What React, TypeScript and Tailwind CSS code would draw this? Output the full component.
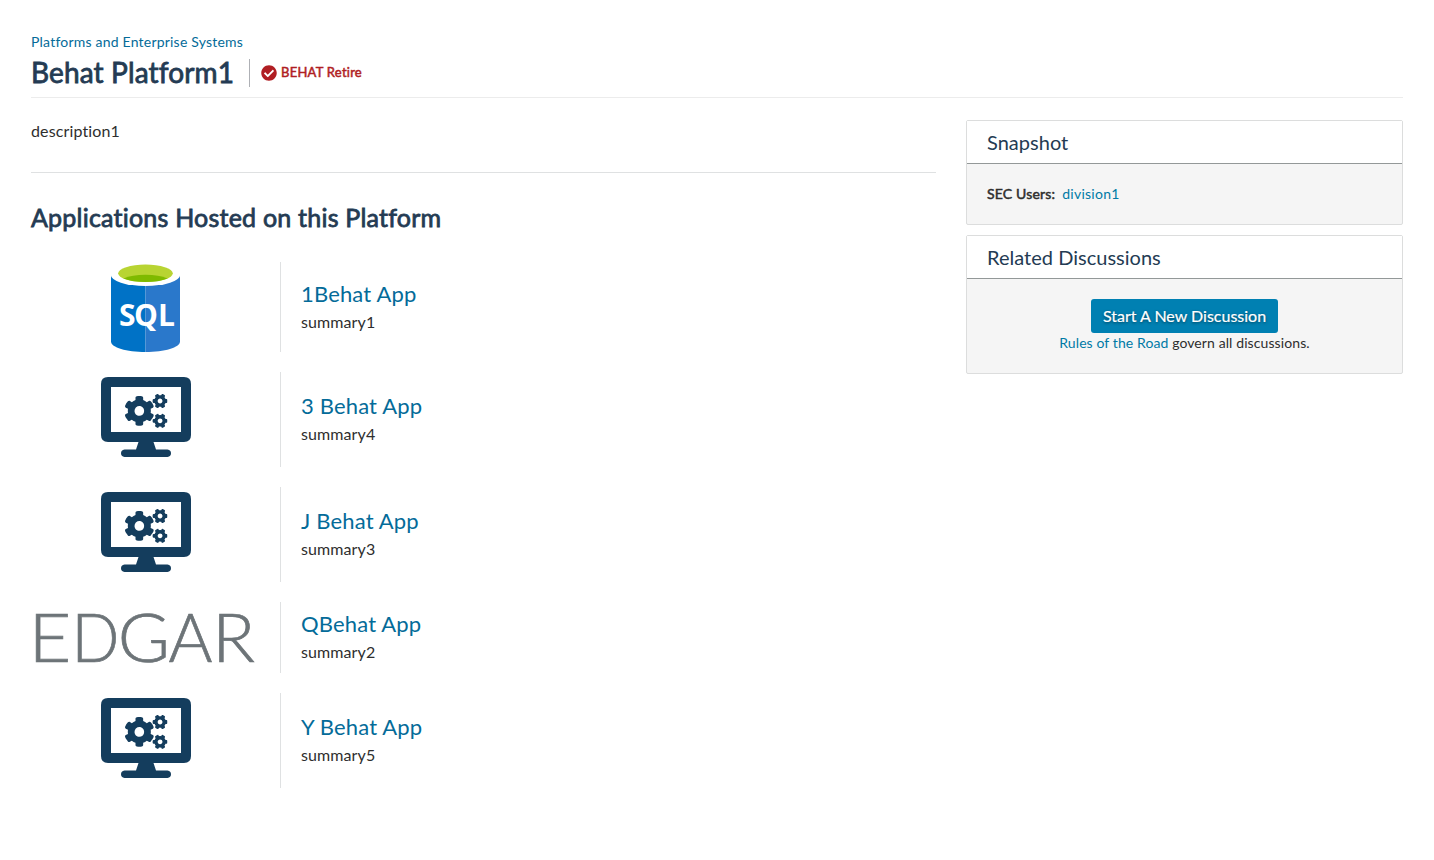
import React from "react";
import { FaCheckCircle, FaCogs } from "react-icons/fa";

function SqlLogo() {
  return (
    <svg width="90" height="90" viewBox="0 0 90 90" role="img" aria-label="SQL">
      <path d="M10 13V79.500C10 85.500 25.500 90 44.500 90V13Z" fill="#0072c6" />
      <path d="M79 13V79.500C79 85.500 63.500 90 44.500 90V13Z" fill="#2a78cb" />
      <ellipse cx="44.500" cy="12.500" rx="34.800" ry="11.500" fill="#fff" />
      <ellipse cx="44.500" cy="11.300" rx="27.300" ry="8.700" fill="#b8d432" />
      <path d="M22.500 16.500Q31 12.800 44.500 12.800T66.500 16.500Q58 20 44.500 20T22.500 16.500Z" fill="#7fba00" />
      <text x="18 33 57" y="64" fill="#fff" className="font-['Open_Sans',sans-serif] text-[30px] font-bold">
        SQL
      </text>
    </svg>
  );
}

function MonitorLogo() {
  return (
    <svg width="90" height="80" viewBox="0 0 90 80" className="mt-[5px] mb-2.5 text-[#143d5d]" role="img" aria-label="Application">
      <path
        fillRule="evenodd"
        fill="currentColor"
        d="M7 0H83Q90 0 90 7V58Q90 65 83 65H52.500L55 72.500H46.500Q50 72.500 66.500 72.500Q70 73 70 76.250T66.500 80H23.500Q20 79.500 20 76.250T23.500 72.500H35L37.500 65H7Q0 65 0 58V7Q0 0 7 0ZM10 10V55H80V10Z"
      />
      <FaCogs x="24" y="17" className="h-[34px] w-[42.5px]" />
    </svg>
  );
}

const edgarLetters = [
  { letter: "E", transform: "translate(-2.6 60) scale(1.1 1)" },
  { letter: "D", transform: "translate(40.5 60) scale(0.94 1)" },
  { letter: "G", transform: "translate(86.7 60) scale(1.06 1)" },
  { letter: "A", transform: "translate(137.5 60) scale(1 1)" },
  { letter: "R", transform: "translate(181.2 60) scale(1.05 1)" },
];

function EdgarLogo() {
  return (
    <svg width="230" height="71" viewBox="0 0 230 71" className="overflow-visible" role="img" aria-label="EDGAR">
      <g fill="#6d7478" stroke="#6d7478" strokeWidth="0.700" className="font-['Lato',sans-serif] text-[67px] font-light">
        {edgarLetters.map(({ letter, transform }) => (
          <text key={letter} transform={transform}>{letter}</text>
        ))}
      </g>
    </svg>
  );
}

const apps = [
  { name: "1Behat App", summary: "summary1", Logo: SqlLogo },
  { name: "3 Behat App", summary: "summary4", Logo: MonitorLogo },
  { name: "J Behat App", summary: "summary3", Logo: MonitorLogo },
  { name: "QBehat App", summary: "summary2", Logo: EdgarLogo },
  { name: "Y Behat App", summary: "summary5", Logo: MonitorLogo },
];

function Panel({ title, className, children }: { title: string; className: string; children: React.ReactNode }) {
  return (
    <section className={`flex flex-col rounded-[2px] border border-[#dcdddd] bg-[#f5f5f5] ${className}`}>
      <h3 className="h-[43px] shrink-0 border-b border-[#939898] bg-white pl-5 text-[20px] leading-[42px] tracking-[0.02px] text-[#243b53]">
        {title}
      </h3>
      {children}
    </section>
  );
}

export default function App() {
  return (
    <div className="min-h-[860px] bg-white px-[31px] pt-8 font-['Lato',sans-serif] text-[#2e2e2e] [font-variant-ligatures:none]">
      <header className="h-[66px] border-b border-[#ececec]">
        <a href="#" className="block h-5 w-fit text-[14px] leading-5 tracking-[0.21px] text-[#046b99]">
          Platforms and Enterprise Systems
        </a>
        <div className="flex h-[42px] items-center">
          <h1 className="w-[203px] pb-0.5 text-[28px] leading-[38px] tracking-[0.14px] whitespace-nowrap text-[#243b53] [-webkit-text-stroke:0.8px_#243b53]">Behat Platform1</h1>
          <div className="ml-[15px] flex h-7 items-center gap-1 border-l border-[#aeb0b5] pl-[11px] text-[13px] text-[#b01e23]">
            <FaCheckCircle size={16} />
            <span className="tracking-[0.25px] [-webkit-text-stroke:0.5px_#b01e23]">BEHAT Retire</span>
          </div>
        </div>
      </header>

      <div className="flex gap-[30px] pt-[22px]">
        <main className="w-[905px]">
          <p className="h-[53px] border-b border-[#dfe1e2] text-[16px] leading-[21px] tracking-[0.13px]">description1</p>
          <h2 className="mt-[27px] text-[25px] leading-[34px] tracking-[0.22px] text-[#243b53] [-webkit-text-stroke:0.8px_#243b53]">
            Applications Hosted on this Platform
          </h2>
          <ul className="mt-[28px] flex flex-col gap-5">
            {apps.map(({ name, summary, Logo }) => (
              <li key={name} className="flex">
                <div className="flex w-[230px] shrink-0 justify-center">
                  <Logo />
                </div>
                <div className="ml-[19px] flex flex-col justify-center border-l border-[#dfe1e2] pb-px pl-5">
                  <a href="#" className="text-[22px] leading-[30px] tracking-[0.16px] text-[#046b99]">{name}</a>
                  <p className="text-[16px] leading-[26px] tracking-[0.1px]">{summary}</p>
                </div>
              </li>
            ))}
          </ul>
        </main>

        <aside className="flex w-[437px] flex-col gap-2.5">
          <Panel title="Snapshot" className="h-[105px]">
            <p className="flex h-[59px] items-center gap-[7px] pl-5 text-[14px]">
              <span className="tracking-[0.18px] [-webkit-text-stroke:0.5px_#2e2e2e]">SEC Users:</span>
              <a href="#" className="tracking-[0.25px] text-[#007aa6]">division1</a>
            </p>
          </Panel>
          <Panel title="Related Discussions" className="h-[139px]">
            <div className="flex flex-col items-center pt-5">
              <button className="h-[34px] w-[187px] rounded-[3px] bg-[#0080b2] text-[16px] leading-[34px] whitespace-nowrap text-white [-webkit-text-stroke:0.2px_#fff] [text-shadow:0_1px_3px_rgba(0,0,0,0.5)]">
                Start A New Discussion
              </button>
              <p className="text-[14px] leading-5 tracking-[0.1px]">
                <a href="#" className="text-[#007aa6]">Rules of the Road</a> govern all discussions.
              </p>
            </div>
          </Panel>
        </aside>
      </div>
    </div>
  );
}
